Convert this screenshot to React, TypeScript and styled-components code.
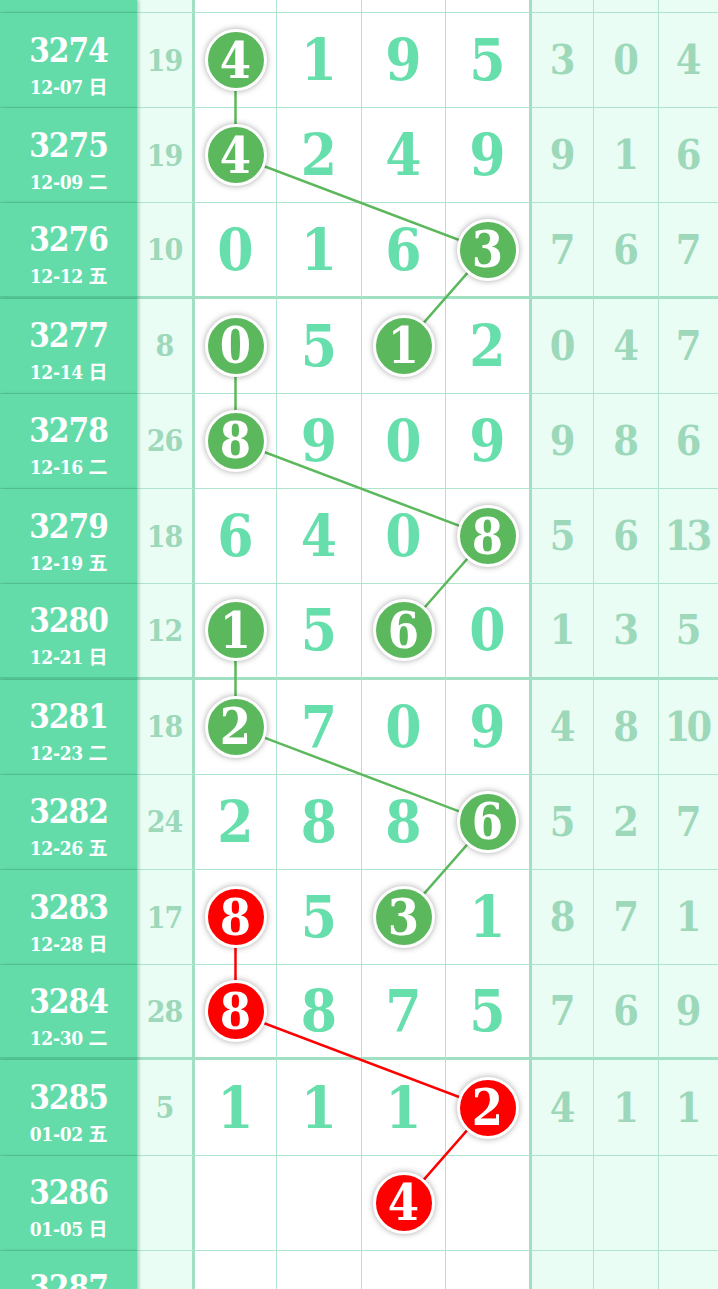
import styled, { createGlobalStyle } from 'styled-components'

const ROW_H = 95.23
const TOP_H = 13
const DIGIT_X = [235.5, 319, 403.5, 487]

type Ball = { col: number; red?: boolean }
type Draw = {
  no: number
  date: string
  sum?: number
  digits: (number | null)[]
  stats: number[]
  balls: Ball[]
}

const draws: Draw[] = [
  { no: 3274, date: '12-07 日', sum: 19, digits: [4, 1, 9, 5], stats: [3, 0, 4], balls: [{ col: 0 }] },
  { no: 3275, date: '12-09 二', sum: 19, digits: [4, 2, 4, 9], stats: [9, 1, 6], balls: [{ col: 0 }] },
  { no: 3276, date: '12-12 五', sum: 10, digits: [0, 1, 6, 3], stats: [7, 6, 7], balls: [{ col: 3 }] },
  { no: 3277, date: '12-14 日', sum: 8, digits: [0, 5, 1, 2], stats: [0, 4, 7], balls: [{ col: 0 }, { col: 2 }] },
  { no: 3278, date: '12-16 二', sum: 26, digits: [8, 9, 0, 9], stats: [9, 8, 6], balls: [{ col: 0 }] },
  { no: 3279, date: '12-19 五', sum: 18, digits: [6, 4, 0, 8], stats: [5, 6, 13], balls: [{ col: 3 }] },
  { no: 3280, date: '12-21 日', sum: 12, digits: [1, 5, 6, 0], stats: [1, 3, 5], balls: [{ col: 0 }, { col: 2 }] },
  { no: 3281, date: '12-23 二', sum: 18, digits: [2, 7, 0, 9], stats: [4, 8, 10], balls: [{ col: 0 }] },
  { no: 3282, date: '12-26 五', sum: 24, digits: [2, 8, 8, 6], stats: [5, 2, 7], balls: [{ col: 3 }] },
  { no: 3283, date: '12-28 日', sum: 17, digits: [8, 5, 3, 1], stats: [8, 7, 1], balls: [{ col: 0, red: true }, { col: 2 }] },
  { no: 3284, date: '12-30 二', sum: 28, digits: [8, 8, 7, 5], stats: [7, 6, 9], balls: [{ col: 0, red: true }] },
  { no: 3285, date: '01-02 五', sum: 5, digits: [1, 1, 1, 2], stats: [4, 1, 1], balls: [{ col: 3, red: true }] },
  { no: 3286, date: '01-05 日', digits: [null, null, 4, null], stats: [], balls: [{ col: 2, red: true }] },
  { no: 3287, date: '01-07 二', digits: [null, null, null, null], stats: [], balls: [] },
]

// trend lines: [row, col] pairs
const trends: { red?: boolean; pts: [number, number][] }[] = [
  { pts: [[0, 0], [1, 0], [2, 3], [3, 2]] },
  { pts: [[3, 0], [4, 0], [5, 3], [6, 2]] },
  { pts: [[6, 0], [7, 0], [8, 3], [9, 2]] },
  { red: true, pts: [[9, 0], [10, 0], [11, 3], [12, 2]] },
]

const centerY = (row: number) => TOP_H + row * ROW_H + (ROW_H - 1) / 2

const GlobalStyle = createGlobalStyle`
  html, body {
    margin: 0;
    padding: 0;
    overflow: hidden;
    background: #ffffff;
  }
`

const App = () => {
  const height = TOP_H + draws.length * ROW_H
  return (
    <>
      <GlobalStyle />
      <Board>
        <Row $top>
          <LabelCell $top />
          <SumCell $top />
          <DigitCell $top />
          <DigitCell $top />
          <DigitCell $top />
          <DigitCell $top $last />
          <StatCell $top />
          <StatCell $top />
          <StatCell $top $last />
        </Row>
        {draws.map((d) => {
          const end = (d.no - 3276) % 4 === 0
          return (
            <Row key={d.no}>
              <LabelCell $end={end}>
                <Issue>{d.no}</Issue>
                <DateText>{d.date}</DateText>
              </LabelCell>
              <SumCell $end={end}>{d.sum}</SumCell>
              {d.digits.map((v, c) => {
                const ball = d.balls.find((b) => b.col === c)
                return (
                  <DigitCell key={c} $end={end} $last={c === 3}>
                    {ball ? <BallMark $red={ball.red}>{v}</BallMark> : v}
                  </DigitCell>
                )
              })}
              {[0, 1, 2].map((i) => (
                <StatCell key={i} $end={end} $last={i === 2}>
                  {d.stats[i]}
                </StatCell>
              ))}
            </Row>
          )
        })}
        <Overlay width={718} height={height} viewBox={`0 0 718 ${height}`}>
          {trends.map((t, i) => (
            <polyline
              key={i}
              points={t.pts.map(([r, c]) => `${DIGIT_X[c]},${centerY(r)}`).join(' ')}
              fill="none"
              stroke={t.red ? '#ff0000' : '#5cb85c'}
              strokeWidth={2.5}
            />
          ))}
        </Overlay>
      </Board>
    </>
  )
}

export default App

const Board = styled.div`
  position: relative;
  width: 718px;
  font-family: 'DejaVu Serif', 'Liberation Serif', 'Noto Sans CJK SC', serif;
  font-stretch: semi-condensed;
`

const Row = styled.div<{ $top?: boolean }>`
  display: grid;
  grid-template-columns: 137px 58px 82px 85px 84px 86px 62px 65px 1fr;
  height: ${({ $top }) => ($top ? TOP_H : ROW_H)}px;
`

type CellProps = { $end?: boolean; $top?: boolean; $last?: boolean }

const LabelCell = styled.div<CellProps>`
  position: relative;
  z-index: 3;
  box-sizing: border-box;
  display: flex;
  flex-direction: column;
  align-items: center;
  justify-content: center;
  gap: 6px;
  background: #64dcaa;
  color: #ffffff;
  border-bottom: ${({ $end }) => ($end ? '3px solid #55c697' : '1px solid #57c99b')};
  box-shadow: 2px 0 3px rgba(40, 120, 90, 0.35);
  padding-top: 9px;
`

const Issue = styled.div`
  font-size: 33px;
  font-weight: bold;
  line-height: 38px;
  letter-spacing: -1px;
`

const DateText = styled.div`
  font-size: 19px;
  font-weight: bold;
  line-height: 22px;
  letter-spacing: -0.3px;
  font-family: 'DejaVu Serif', 'Noto Sans CJK SC', serif;
`

const baseCell = `
  box-sizing: border-box;
  display: flex;
  align-items: center;
  justify-content: center;
  font-weight: bold;
`

const SumCell = styled.div<CellProps>`
  ${baseCell}
  background: #eafdf5;
  color: #9cd8b9;
  font-size: 30px;
  letter-spacing: -1px;
  border-right: 3px solid #a2e0c4;
  border-bottom: ${({ $end }) => ($end ? '3px solid #a2e0c4' : '1px solid #aee5cc')};
`

const DigitCell = styled.div<CellProps>`
  ${baseCell}
  background: #ffffff;
  color: #66dfad;
  font-size: 58px;
  border-right: ${({ $last }) => ($last ? '3px solid #a2e0c4' : '1px solid #aee5cc')};
  border-bottom: ${({ $end }) => ($end ? '3px solid #a2e0c4' : '1px solid #aee5cc')};
`

const StatCell = styled.div<CellProps>`
  ${baseCell}
  background: #eafdf5;
  color: #9cd8b9;
  font-size: 41px;
  letter-spacing: -4px;
  text-indent: -4px;
  border-right: ${({ $last }) => ($last ? 'none' : '1px solid #aee5cc')};
  border-bottom: ${({ $end }) => ($end ? '3px solid #a2e0c4' : '1px solid #aee5cc')};
`

const BallMark = styled.span<{ $red?: boolean }>`
  position: relative;
  z-index: 2;
  box-sizing: border-box;
  width: 62px;
  height: 62px;
  border-radius: 50%;
  border: 3px solid #ffffff;
  background: ${({ $red }) => ($red ? '#ff0000' : '#5cb85c')};
  color: #ffffff;
  font-size: 50px;
  display: flex;
  align-items: center;
  justify-content: center;
  box-shadow: 0 0 6px rgba(0, 0, 0, 0.35);
`

const Overlay = styled.svg`
  position: absolute;
  left: 0;
  top: 0;
  z-index: 1;
  pointer-events: none;
`
